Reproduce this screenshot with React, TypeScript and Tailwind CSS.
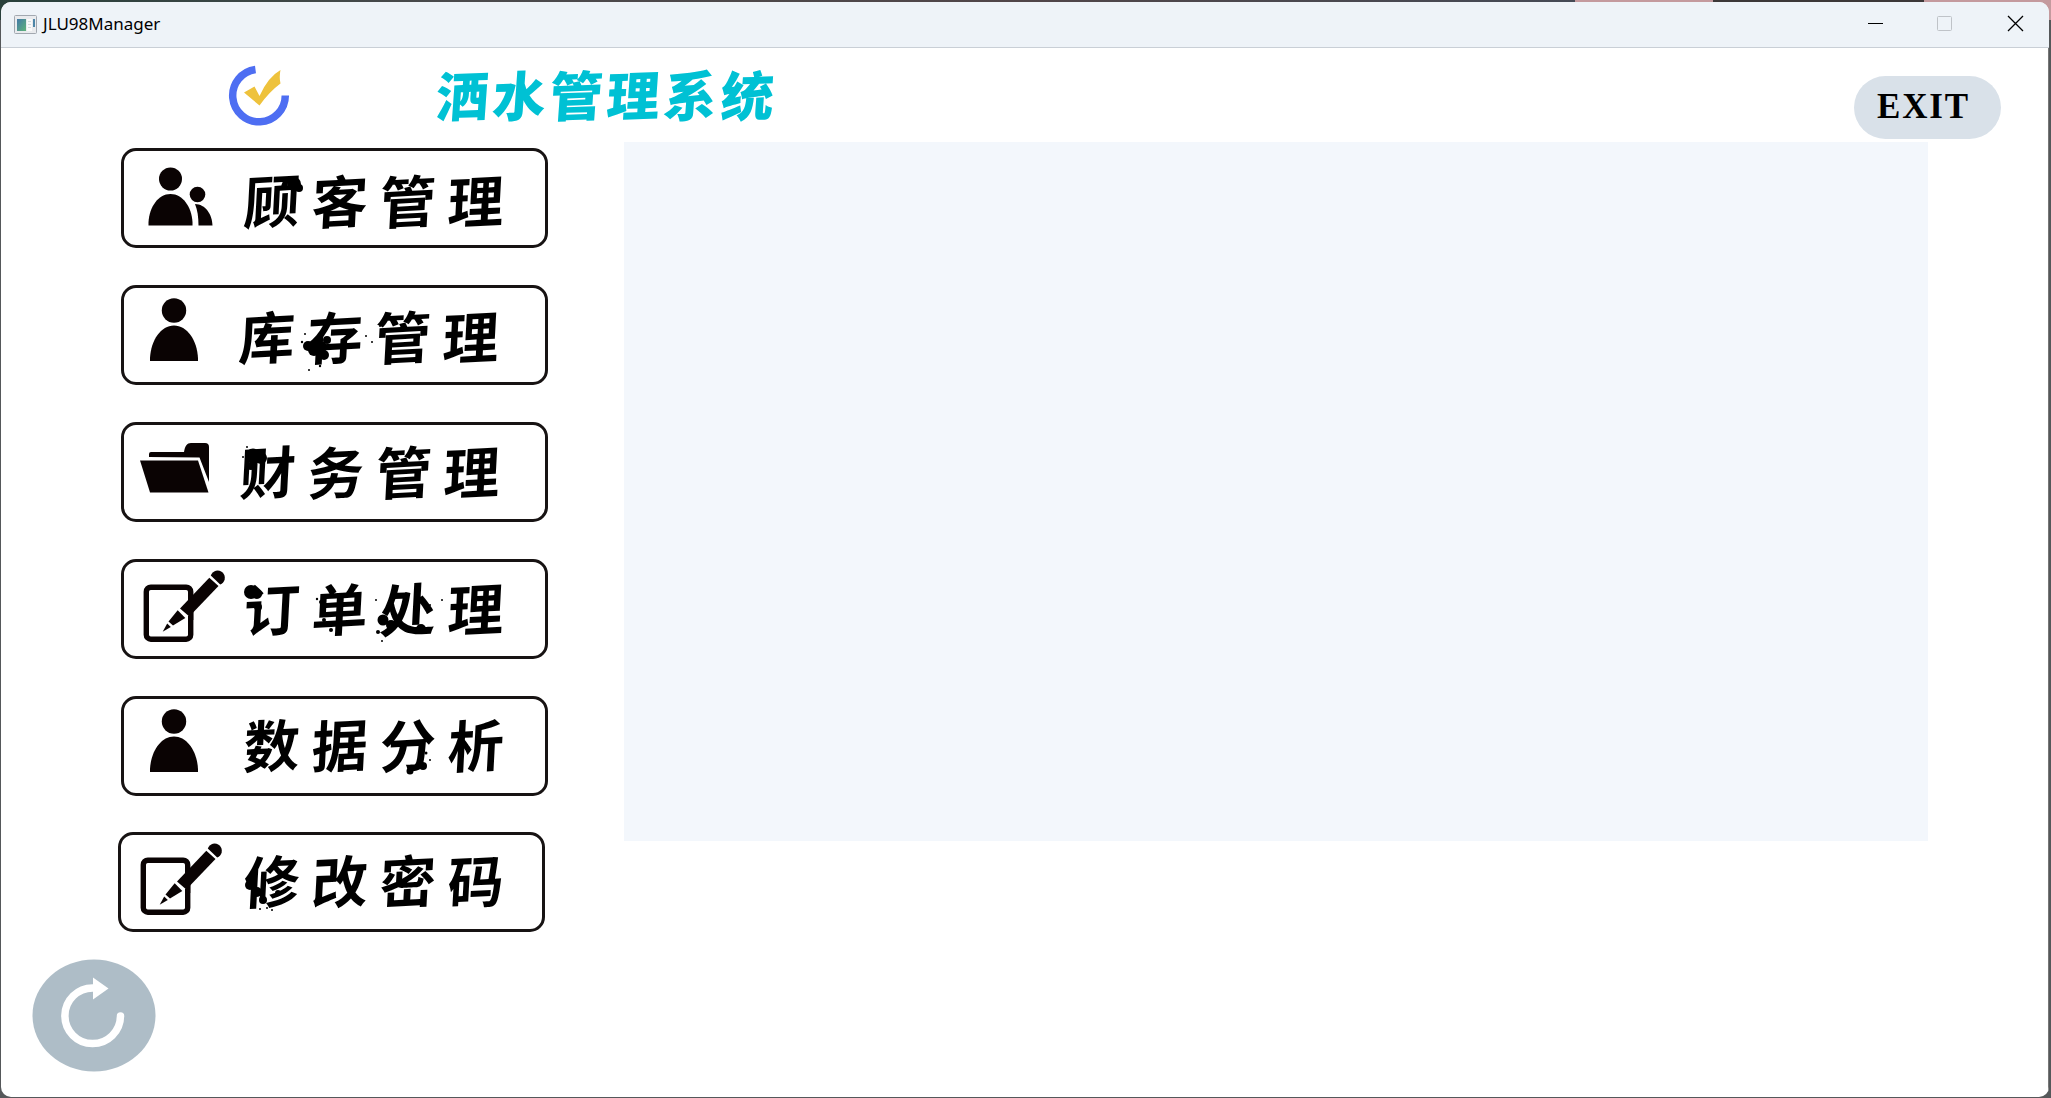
import React from "react";

type Blob = [number, number, number];

const ink = "#0a0303";

function PeopleIcon() {
  return (
    <svg className="h-full w-full" viewBox="0 0 114 94" fill={ink}>
      <circle cx="46.5" cy="28" r="11.5" />
      <path d="M24.5 74.5V71C25.500 56 34 43 46.500 43S67.500 56 68.500 71V74.500Z" />
      <circle cx="73.500" cy="43.500" r="7.800" />
      <path d="M71 53C81.500 53 88.500 64 88.500 74.500H74.500C74.500 66 73.500 59 71 53Z" />
    </svg>
  );
}

function PersonIcon() {
  return (
    <svg className="h-full w-full" viewBox="0 0 114 94" fill={ink}>
      <circle cx="50" cy="22.500" r="12.200" />
      <path d="M26 73V70C27 52 37 37.500 50 37.500S73 52 74 70V73Z" />
    </svg>
  );
}

function FolderIcon() {
  return (
    <svg className="h-full w-full" viewBox="0 0 114 94" fill={ink}>
      <path d="M25 32V29Q25 27 27 27H60C61 21 63 18 67 18H81Q85 18 85 22V57L75.500 32.500Z" />
      <path d="M16 35.500H74L84.500 67.500H26Z" />
    </svg>
  );
}

function EditIcon() {
  return (
    <svg className="h-full w-full" viewBox="0 0 114 94" fill={ink}>
      <rect x="22.300" y="25.200" width="44.400" height="52" rx="4.500" fill="none" stroke={ink} strokeWidth="5.400" />
      <path d="M38 70.500L51 48L58 41L69 50L52 64Z" fill="#fff" />
      <path d="M38.700 69.800L43.200 61.500L46.800 65Z" />
      <path d="M44.500 59.500L53.700 48.200L61.300 56L49 63.500Z" />
      <path d="M56 46.500L85.300 15.800L94.500 24L65.300 54.500Z" />
      <path d="M65.500 53.500L69.300 49.500V58H64V55Z" />
      <path d="M86.800 13.500A7.200 7.200 0 1 1 96.200 22.500Z" />
    </svg>
  );
}

interface Item {
  label: string;
  icon: () => React.ReactElement;
  row: string;
  text: string;
  blobs: Blob[];
}

const items: Item[] = [
  { label: "顾客管理", icon: PeopleIcon, row: "", text: "pb-[3px]", blobs: [[56, 33, 7], [61, 37, 4]] },
  {
    label: "库存管理",
    icon: PersonIcon,
    row: "mt-[37px]",
    text: "-ml-[5px] pb-[4px]",
    blobs: [[75, 58, 5], [81, 62, 6], [88, 59, 6], [91, 67, 5], [94, 52, 4], [72, 46, 1], [69, 54, 1.2], [133, 48, 1], [76, 82, 1], [87, 78, 1.2], [139, 54, 1], [147, 38, 1]],
  },
  {
    label: "财务管理",
    icon: FolderIcon,
    row: "mt-[37px]",
    text: "-ml-[4px] pb-[8px]",
    blobs: [[19, 31, 7.5], [27, 33, 6], [17, 41, 4], [13, 22, 1], [9, 32, 1]],
  },
  {
    label: "订单处理",
    icon: EditIcon,
    row: "mt-[37px]",
    text: "pb-[8px]",
    blobs: [[13, 30, 7], [19, 32, 5], [20, 45, 4], [79, 37, 1.2], [83, 40, 2], [86, 58, 2], [145, 58, 5.5], [153, 63, 5], [140, 70, 2], [144, 79, 1], [138, 38, 1], [183, 67, 5], [204, 38, 1], [192, 43, 1], [93, 68, 2]],
  },
  {
    label: "数据分析",
    icon: PersonIcon,
    row: "mt-[37px]",
    text: "pb-[10px]",
    blobs: [[185, 67, 4], [188, 54, 1.5], [192, 61, 1], [172, 72, 3.5]],
  },
  {
    label: "修改密码",
    icon: EditIcon,
    row: "mt-[36px] -ml-[3px]",
    text: "ml-[3px] pb-[10px]",
    blobs: [[12, 50, 5], [19, 57, 5], [25, 65, 4], [40, 58, 3], [22, 74, 1], [29, 73, 1], [34, 75, 1]],
  },
];

function MenuButton({ label, icon: Icon, row, text, blobs }: Item) {
  return (
    <button
      className={
        "flex h-[100px] w-[427px] items-center rounded-[15px] border-[3px] border-[#171313] bg-white " + row
      }
    >
      <span className="h-[94px] w-[114px] shrink-0">
        <Icon />
      </span>
      <span className={"relative flex h-[94px] shrink-0 " + text}>
        {label.split("").map((ch, i) => (
          <span
            key={i}
            className="flex w-[68px] -skew-x-6 -rotate-3 items-center justify-center pt-1 font-['Noto_Sans_CJK_SC','Noto_Sans',sans-serif] text-[56px] leading-none font-bold text-black"
          >
            {ch}
          </span>
        ))}
        <svg className="absolute top-0 left-0 h-[94px] w-[272px]" viewBox="0 0 272 94">
          {blobs.map(([x, y, r], i) => (
            <circle key={i} cx={x} cy={y} r={r} />
          ))}
        </svg>
      </span>
    </button>
  );
}

function AppIcon() {
  return (
    <svg className="mb-px ml-px h-[19px] w-[23px]" viewBox="0 0 23 19">
      <defs>
        <linearGradient id="pane" x1="0" y1="0" x2="1" y2="1">
          <stop offset="0" stopColor="#4379a8" />
          <stop offset="1" stopColor="#5fb37a" />
        </linearGradient>
      </defs>
      <rect x="0.500" y="0.500" width="22" height="18" rx="1" fill="#e9ebee" stroke="#a2a8b0" />
      <rect x="3" y="4" width="9" height="12" fill="url(#pane)" />
      <rect x="13" y="4" width="5" height="12" fill="#fafafa" />
      <rect x="19" y="4" width="2" height="8" fill="#4d86a8" />
      <path d="M14 6.500h3M14 9.500h3M14 12.500h3" stroke="#d5d8dc" />
    </svg>
  );
}

export default function App() {
  return (
    <div className="h-[1098px] w-[2051px] overflow-hidden bg-[linear-gradient(90deg,#28403b_0,#4a4a4c_22%,#504548_50%,#454a55_76.8%,#c49a9e_76.8%,#c49a9e_83.5%,#3c3838_83.5%,#3c3838_93.8%,#c49a9e_93.8%)] bg-[#55585a] bg-[length:100%_20px] bg-no-repeat pt-[2px] pr-[2px] pb-px pl-px">
      <div className="flex h-full flex-col overflow-hidden rounded-[10px] bg-white">
        <header className="flex h-[46px] shrink-0 items-center border-b border-[#c9cfd6] bg-[#eef3f8] pl-3">
          <AppIcon />
          <span className="mb-[2px] ml-[6px] font-['Noto_Sans','Open_Sans',sans-serif] text-[17px] text-black">
            JLU98Manager
          </span>
          <svg className="ml-auto h-[46px] w-[200px]" viewBox="0 0 200 46" fill="none">
            <path d="M19 21.500h15" stroke="#000" />
            <rect x="88.500" y="14.500" width="14" height="14" rx="1" stroke="#bfc3c8" />
            <path d="M159 14l15 15M174 14l-15 15" stroke="#000" strokeWidth="1.300" />
          </svg>
        </header>

        <main className="flex min-h-0 flex-1 border-r border-[#777]">
          <section className="flex w-[623px] shrink-0 flex-col">
            <div className="flex h-[100px] shrink-0 items-start">
              <svg className="mt-[17px] ml-[226px] h-[62px] w-[64px] shrink-0" viewBox="0 0 64 62" fill="none">
                <path d="M28.500 4.500A26.300 26.300 0 1 0 58.300 30.500" stroke="#4e6ef2" strokeWidth="7.500" />
                <path d="M17 27.500L27.500 21.500L32.500 31Q41 12 53.500 5Q52 12 53.500 18.500Q42 27 32.500 40.500Z" fill="#eec23c" />
              </svg>
              <h1 className="mt-[17px] ml-[143px] flex shrink-0 font-['Noto_Sans_CJK_SC','Noto_Sans',sans-serif] text-[53px] leading-[56px] font-black text-[#00c1d4]">
                {"洒水管理系统".split("").map((ch, i) => (
                  <span key={i} className="w-[57px] -skew-x-6 -rotate-2 text-center">
                    {ch}
                  </span>
                ))}
              </h1>
            </div>
            <nav className="ml-[120px] flex flex-col">
              {items.map((item) => (
                <MenuButton key={item.label} {...item} />
              ))}
            </nav>
            <button className="mt-[27px] ml-[31px] h-[113px] w-[124px]" aria-label="refresh">
              <svg className="h-full w-full" viewBox="0 0 124 113" fill="none">
                <ellipse cx="62" cy="56.500" rx="61.500" ry="56" fill="#aebdc7" />
                <path d="M61 29A27.800 27.800 0 1 0 88.500 57" stroke="#fff" strokeWidth="7.500" strokeLinecap="round" />
                <path d="M61 18.500L76.500 29.500L61 40.500Z" fill="#fff" />
              </svg>
            </button>
          </section>

          <section className="flex flex-1 flex-col">
            <div className="flex h-[94px] shrink-0 justify-end pt-[28px] pr-[47px]">
              <button className="flex h-[63px] w-[147px] items-center rounded-full bg-[#d9e1e9] pb-[3px] pl-[23px] font-['Liberation_Serif',serif] text-[35px] leading-none font-bold tracking-[1.8px] text-black">
                EXIT
              </button>
            </div>
            <div className="h-[699px] w-[1304px] bg-[#f3f7fc]" />
          </section>
        </main>
      </div>
    </div>
  );
}
